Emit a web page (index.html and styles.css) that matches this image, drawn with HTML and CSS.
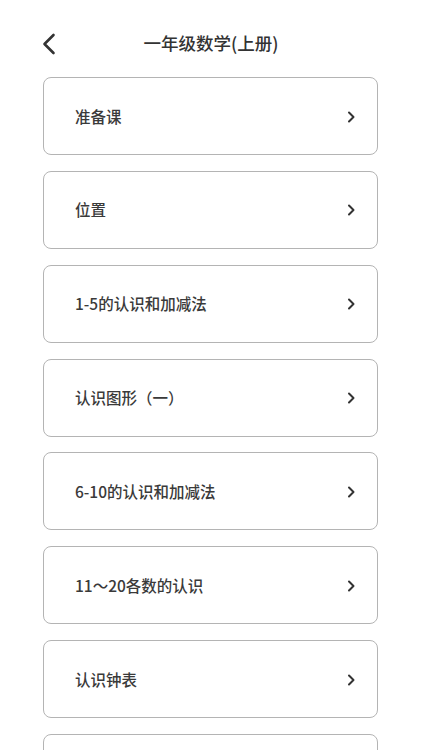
FILE: index.html
```html
<!DOCTYPE html>
<html lang="zh-CN">
<head>
  <meta charset="utf-8" />
  <title>一年级数学(上册)</title>
  <link rel="stylesheet" href="styles.css">
</head>
<body>
  <header class="topbar">
    <a class="back" href="#">
      <svg width="14" height="22" viewBox="0 0 14 22"><path d="M11.5 2 L2.5 11 L11.5 20" fill="none" stroke="#333" stroke-width="2.6" stroke-linecap="round" stroke-linejoin="round"/></svg>
    </a>
    <h1 class="title">一年级数学(上册)</h1>
  </header>

  <ul class="units">
    <li class="unit"><span>准备课</span><svg class="arrow" width="9" height="12" viewBox="0 0 9 12"><path d="M2 1.5 L6.5 6 L2 10.5" fill="none" stroke="#333" stroke-width="2" stroke-linecap="round" stroke-linejoin="round"/></svg></li>
    <li class="unit"><span>位置</span><svg class="arrow" width="9" height="12" viewBox="0 0 9 12"><path d="M2 1.5 L6.5 6 L2 10.5" fill="none" stroke="#333" stroke-width="2" stroke-linecap="round" stroke-linejoin="round"/></svg></li>
    <li class="unit"><span>1-5的认识和加减法</span><svg class="arrow" width="9" height="12" viewBox="0 0 9 12"><path d="M2 1.5 L6.5 6 L2 10.5" fill="none" stroke="#333" stroke-width="2" stroke-linecap="round" stroke-linejoin="round"/></svg></li>
    <li class="unit"><span>认识图形（一）</span><svg class="arrow" width="9" height="12" viewBox="0 0 9 12"><path d="M2 1.5 L6.5 6 L2 10.5" fill="none" stroke="#333" stroke-width="2" stroke-linecap="round" stroke-linejoin="round"/></svg></li>
    <li class="unit"><span>6-10的认识和加减法</span><svg class="arrow" width="9" height="12" viewBox="0 0 9 12"><path d="M2 1.5 L6.5 6 L2 10.5" fill="none" stroke="#333" stroke-width="2" stroke-linecap="round" stroke-linejoin="round"/></svg></li>
    <li class="unit"><span>11～20各数的认识</span><svg class="arrow" width="9" height="12" viewBox="0 0 9 12"><path d="M2 1.5 L6.5 6 L2 10.5" fill="none" stroke="#333" stroke-width="2" stroke-linecap="round" stroke-linejoin="round"/></svg></li>
    <li class="unit"><span>认识钟表</span><svg class="arrow" width="9" height="12" viewBox="0 0 9 12"><path d="M2 1.5 L6.5 6 L2 10.5" fill="none" stroke="#333" stroke-width="2" stroke-linecap="round" stroke-linejoin="round"/></svg></li>
    <li class="unit"></li>
  </ul>
</body>
</html>
```

FILE: styles.css
```css
*
{
  margin: 0;
  padding: 0;
  box-sizing: border-box;
}
html, body
{
  overflow: hidden;
}
body
{
  background: #fff;
  color: #333;
  font-family: "Noto Sans CJK SC", "Noto Sans", sans-serif;
  height: 750px;
}

.topbar {
  position: relative;
  height: 44px;
  margin-top: 22px;
  display: flex;
  align-items: center;
  justify-content: center;
}
.back {
  position: absolute;
  left: 42px;
  top: 11px;
  display: block;
  width: 14px;
  height: 22px;
}
.back svg { display: block; }
.title {
  font-size: 17.5px;
  font-weight: 500;
  color: #333;
  line-height: 1;
  margin-top: -3px;
}

.units {
  list-style: none;
  margin: 11px 44px 0 43px;
  display: flex;
  flex-direction: column;
  gap: 15.86px;
}
.unit {
  height: 78px;
  border: 1px solid #b4b4b4;
  border-radius: 8px;
  display: flex;
  align-items: center;
  justify-content: space-between;
  padding: 0 21px 0 31px;
  font-size: 15.5px;
  font-weight: 500;
  color: #3a3a3a;
  flex-shrink: 0;
}
.unit span { margin-top: -1px; }
.arrow {
  display: block;
  margin-top: 1px;
}
```
